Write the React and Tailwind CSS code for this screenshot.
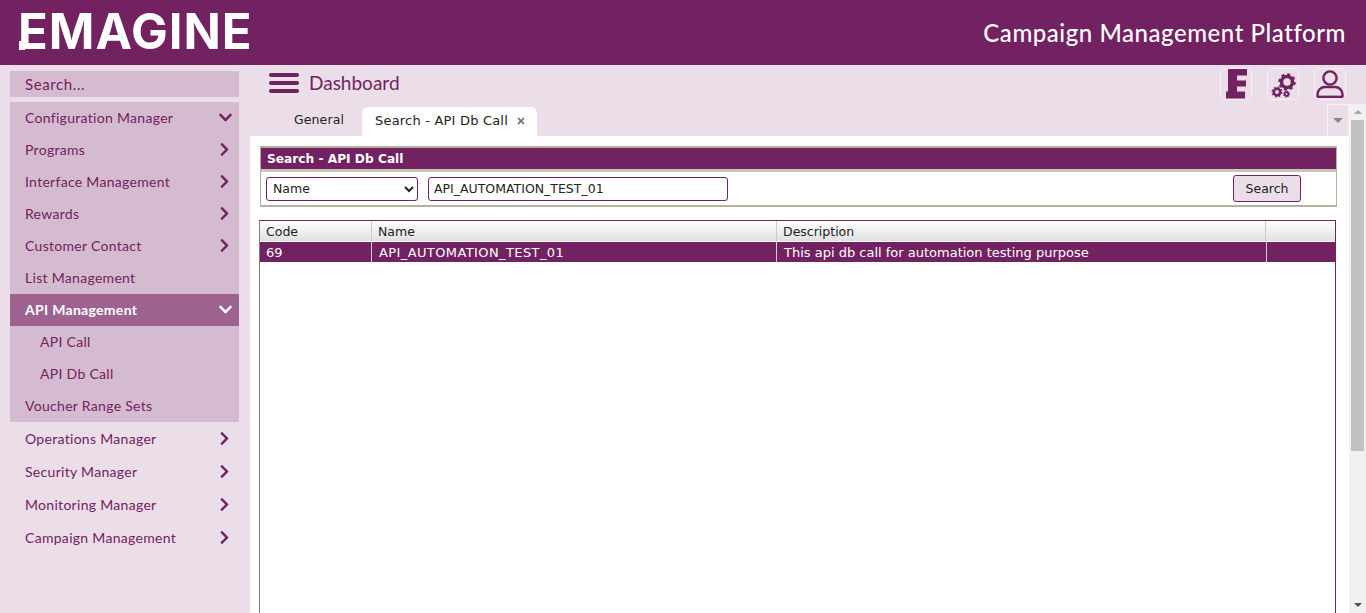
import React from "react";
import { FaChevronDown, FaChevronRight, FaTimes } from "react-icons/fa";

const menuTop = [
  { label: "Configuration Manager", icon: "down" },
  { label: "Programs", icon: "right" },
  { label: "Interface Management", icon: "right" },
  { label: "Rewards", icon: "right" },
  { label: "Customer Contact", icon: "right" },
  { label: "List Management" },
];

const menuBottom = ["Operations Manager", "Security Manager", "Monitoring Manager", "Campaign Management"];

const sideFont = "[font-family:Lato,sans-serif]";

function Gear({ cx, cy, r, tooth, width }) {
  const circ = 2 * Math.PI * (r + width / 2);
  return (
    <g fill="none" stroke="#722161">
      <circle cx={cx} cy={cy} r={r} strokeWidth={width} />
      <circle cx={cx} cy={cy} r={r + width / 2} strokeWidth={tooth} strokeDasharray={`${circ / 16} ${circ / 16}`} />
    </g>
  );
}

function TopIcon({ children }) {
  return (
    <div className="w-8 h-8 rounded-md border border-[#f7f1f6] flex items-center justify-center">
      {children}
    </div>
  );
}

export default function App() {
  return (
    <div className="w-[1366px] h-[613px] overflow-hidden bg-[#ebdee9] flex flex-col">
      <header className="h-[65px] shrink-0 bg-[#722161] flex items-center justify-between pl-[18px] pr-5 text-white">
        <div className="relative text-[49px] leading-none font-bold tracking-[1px] -mt-[2px] [font-family:Inter,sans-serif]">
          EMAGINE
          {/* foot of the logo's first E */}
          <div className="absolute left-px bottom-[6px] w-[6px] h-[9px] bg-white" />
        </div>
        <div className={`text-[24px] font-medium mt-px ${sideFont} tracking-[0.55px]`}>Campaign Management Platform</div>
      </header>

      <div className="flex-1 flex min-h-0">
        <aside className={`w-[250px] shrink-0 pl-[10px] pr-[11px] pt-[6px] text-[14px] text-[#722161] ${sideFont} tracking-[0.3px]`}>
          <div className="h-[26px] bg-[#d5bbd0] pl-[15px] flex items-center text-[15px] tracking-[0.6px]">Search...</div>
          <div className="mt-[5px] bg-[#d5bbd0]">
            {menuTop.map((item) => (
              <div key={item.label} className="h-8 pl-[15px] pr-[6px] pb-[2px] flex items-center justify-between">
                <span>{item.label}</span>
                {item.icon === "down" && <FaChevronDown className="w-[15px] h-[15px]" />}
                {item.icon === "right" && <FaChevronRight className="w-[15px] h-[15px] mr-[1px]" />}
              </div>
            ))}
            <div className="h-8 pl-[15px] pr-[6px] pb-[2px] flex items-center justify-between bg-[#9e6290] text-white font-bold">
              <span>API Management</span>
              <FaChevronDown className="w-[15px] h-[15px]" />
            </div>
            <div className="h-8 pl-[30px] pb-[2px] flex items-center">API Call</div>
            <div className="h-8 pl-[30px] pb-[2px] flex items-center">API Db Call</div>
            <div className="h-8 pl-[15px] pb-[2px] flex items-center">Voucher Range Sets</div>
          </div>
          <div>
            {menuBottom.map((label) => (
              <div key={label} className="h-[33px] pl-[15px] pr-[7px] flex items-center justify-between">
                <span>{label}</span>
                <FaChevronRight className="w-[15px] h-[15px]" />
              </div>
            ))}
          </div>
        </aside>

        <main className="flex-1 min-w-0 flex flex-col">
          <div className="h-[39px] shrink-0 flex items-start justify-between pl-[19px] pr-5 pt-[3px]">
            <div className="flex items-center h-[30px]">
              <div className="w-[30px] flex flex-col gap-[4px]">
                <div className="h-1 rounded-full bg-[#722161]" />
                <div className="h-1 rounded-full bg-[#722161]" />
                <div className="h-1 rounded-full bg-[#722161]" />
              </div>
              <span className={`ml-[10px] mt-px text-[19px] text-[#722161] ${sideFont}`}>Dashboard</span>
            </div>
            <div className="flex gap-[15px]">
              <TopIcon>
                <svg width="24" height="30" viewBox="0 0 24 30">
                  <path d="M4 0h19v6.500H13v5h9v6H13v5h8v7H2v-7h2z" fill="#722161" />
                </svg>
              </TopIcon>
              <TopIcon>
                <svg width="28" height="28" viewBox="0 0 28 28">
                  <Gear cx={18} cy={12} r={5.5} tooth={3} width={3.5} />
                  <Gear cx={8} cy={22} r={3.2} tooth={2} width={2.5} />
                  <Gear cx={17.5} cy={24} r={1.8} tooth={1.5} width={1.8} />
                </svg>
              </TopIcon>
              <TopIcon>
                <svg width="30" height="30" viewBox="0 0 30 30" fill="none" stroke="#722161" strokeWidth="2.4">
                  <circle cx="15" cy="9" r="6.6" />
                  <path d="M2.5 28v-2.5c0-4.500 3.500-7.500 7.500-7.500h10c4 0 7.500 3 7.500 7.500V28" />
                  <path d="M2 27.800h26" />
                </svg>
              </TopIcon>
            </div>
          </div>

          <div className="flex-1 min-h-0 flex">
            <div className="flex-1 min-w-0 flex flex-col">
              <div className="h-8 shrink-0 flex items-end relative text-[13px] text-[#222] [font-family:'DejaVu_Sans',sans-serif]">
                <div className="ml-[44px] w-[68px] h-[29px] pb-[2px] flex items-center text-[12.5px] tracking-[0.1px]">General</div>
                <div className="w-[175px] h-[29px] pb-[2px] bg-white rounded-t-md flex items-center pl-[13px] tracking-[0.2px]">
                  <span>Search - API Db Call</span>
                  <FaTimes className="ml-[8px] w-[10px] h-[10px] text-[#777]" />
                </div>
                <div className="absolute right-0 top-0 w-[22px] h-8 border-l border-t border-r border-[#f7f1f6] flex items-center justify-center">
                  <div className="w-0 h-0 border-x-[5px] border-x-transparent border-t-[5px] border-t-[#888]" />
                </div>
              </div>

              <div className="flex-1 min-h-0 bg-white pt-[10px] pl-[9px] pr-[13px] flex flex-col text-[12.5px] text-[#222] [font-family:'DejaVu_Sans',sans-serif]">
                <div className="ml-[1px] -mr-px h-[61px] shrink-0 border-2 border-[#b5b0a0] border-l-1 border-r-1 flex flex-col">
                  <div className="h-[21px] bg-[#722161] text-white text-[12.2px] font-bold flex items-center pl-[6px] pt-[2px]">Search - API Db Call</div>
                  <div className="h-[3px] bg-[#c9c5b8]" />
                  <div className="flex-1 flex items-center pl-[5px] pr-[35px]">
                    <select className="w-[152px] h-6 border border-[#722161] rounded-[3px] bg-white pl-[2px]" defaultValue="Name">
                      <option>Name</option>
                    </select>
                    <input
                      className="ml-[10px] w-[300px] h-6 border border-[#722161] rounded-[3px] bg-white px-[5px]"
                      defaultValue="API_AUTOMATION_TEST_01"
                    />
                    <button className="ml-auto w-[68px] h-[27px] pt-[2px] border border-[#722161] rounded-[3px] bg-[#ebdee9]">Search</button>
                  </div>
                </div>

                <div className="mt-[13px] flex-1 min-h-0 border border-[#808080] border-b-0 border-t-[#722161] border-r-[#722161] -mb-px">
                  <div className="h-5 flex bg-gradient-to-b from-white to-[#dfe1e1]">
                    <div className="w-[112px] pl-[6px] pt-[2px] flex items-center border-r border-[#ccc]">Code</div>
                    <div className="w-[405px] pl-[6px] pt-[2px] flex items-center border-r border-[#ccc]">Name</div>
                    <div className="w-[489px] pl-[6px] pt-[2px] flex items-center border-r border-[#ccc]">Description</div>
                    <div className="flex-1" />
                  </div>
                  <div className="mt-px h-5 flex bg-[#722161] text-white text-[13px]">
                    <div className="w-[112px] pl-[6px] pt-[2px] flex items-center border-r border-[#ccc]">69</div>
                    <div className="w-[405px] pl-[7px] pt-[2px] flex items-center border-r border-[#ccc] tracking-[0.4px]">API_AUTOMATION_TEST_01</div>
                    <div className="w-[490px] pl-[7px] pt-[2px] flex items-center border-r border-[#ccc]">This api db call for automation testing purpose</div>
                    <div className="flex-1" />
                  </div>
                </div>
              </div>
            </div>

            <div className="w-[17px] shrink-0 bg-[#f1f1f1] flex flex-col items-center">
              <div className="h-4 flex items-center justify-center">
                <div className="w-0 h-0 border-x-[4px] border-x-transparent border-b-[4px] border-b-[#a3a3a3]" />
              </div>
              <div className="w-[13px] h-[331px] bg-[#c1c1c1]" />
              <div className="flex-1" />
              <div className="h-4 flex items-center justify-center">
                <div className="w-0 h-0 border-x-[4px] border-x-transparent border-t-[4px] border-t-[#505050]" />
              </div>
            </div>
          </div>
        </main>
      </div>
    </div>
  );
}
